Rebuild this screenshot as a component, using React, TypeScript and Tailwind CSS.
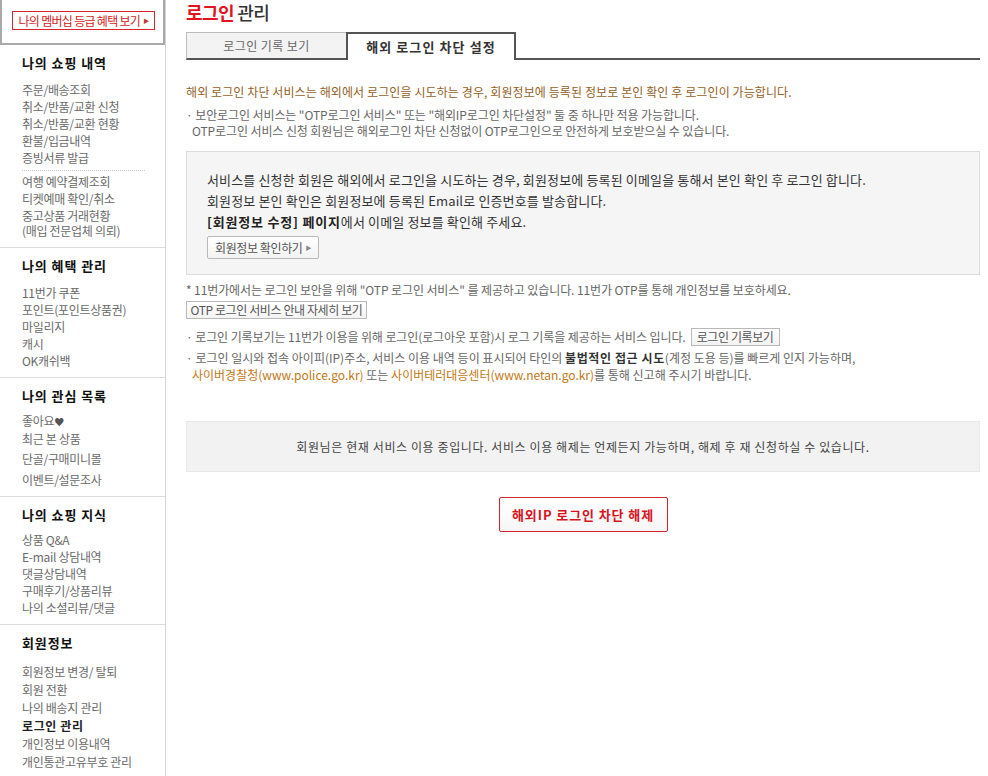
import React from "react";

type MenuItem = { label: React.ReactNode; className?: string };
type MenuSection = {
  title: string;
  items: MenuItem[];
  listClass?: string;
  dividerAfter?: number;
};

const sections: MenuSection[] = [
  {
    title: "나의 쇼핑 내역",
    dividerAfter: 4,
    items: [
      { label: "주문/배송조회" },
      { label: "취소/반품/교환 신청" },
      { label: "취소/반품/교환 현황" },
      { label: "환불/입금내역" },
      { label: "증빙서류 발급" },
      { label: "여행 예약결제조회" },
      { label: "티켓예매 확인/취소" },
      {
        label: (
          <>
            중고상품 거래현황
            <br />
            (매입 전문업체 의뢰)
          </>
        ),
        className: "leading-[15px] -mt-[1px]",
      },
    ],
  },
  {
    title: "나의 혜택 관리",
    items: [
      { label: "11번가 쿠폰" },
      { label: "포인트(포인트상품권)" },
      { label: "마일리지" },
      { label: "캐시" },
      { label: "OK캐쉬백" },
    ],
  },
  {
    title: "나의 관심 목록",
    listClass: "mt-[10px] gap-[3px]",
    items: [
      {
        label: (
          <>
            좋아요<span className="text-[#555] text-[10px] leading-[10px]">♥</span>
          </>
        ),
      },
      { label: "최근 본 상품", className: "mt-[1px]" },
      { label: "단골/구매미니몰", className: "mt-[3px]" },
      { label: "이벤트/설문조사", className: "mt-[4px]" },
    ],
  },
  {
    title: "나의 쇼핑 지식",
    listClass: "mt-[10px] gap-[3px]",
    items: [
      { label: "상품 Q&A" },
      { label: "E-mail 상담내역" },
      { label: "댓글상담내역" },
      { label: "구매후기/상품리뷰" },
      { label: "나의 소셜리뷰/댓글" },
    ],
  },
  {
    title: "회원정보",
    listClass: "mt-[14px] gap-[4px]",
    items: [
      { label: "회원정보 변경/ 탈퇴" },
      { label: "회원 전환" },
      { label: "나의 배송지 관리" },
      { label: "로그인 관리", className: "font-bold text-[#222] tracking-[0.6px]" },
      { label: "개인정보 이용내역" },
      { label: "개인통관고유부호 관리" },
    ],
  },
];

const Sidebar: React.FC = () => {
  return (
    <aside className="w-[166px] shrink-0 border-r border-[#d3d3d3] min-h-[776px]">
      {/* membership box */}
      <div className="h-[45px] border-l-2 border-r-2 border-b-2 border-[#a9a9a9] pt-[11px] pl-[10px]">
        <button className="h-[19px] w-[143px] border border-[#d6262c] bg-white text-[12px] leading-[17px] tracking-[-0.7px] text-[#d41a21] flex items-center justify-center gap-[3px] whitespace-nowrap">
          나의 멤버십 등급 혜택 보기
          <span className="text-[6px] text-[#c33]">▶</span>
        </button>
      </div>

      {sections.map((s) => (
        <div
          key={s.title}
          className="border-b border-[#dddddd] pt-[10px] pb-[9px] pl-[22px]"
        >
          <h4 className="text-[13px] leading-[16px] font-bold text-[#111] tracking-[0.9px]">
            {s.title}
          </h4>
          <ul
            className={
              "flex flex-col text-[12px] leading-[14px] text-[#6a6a6a] tracking-[-0.3px] " +
              (s.listClass ?? "mt-[12px] gap-[3px]")
            }
          >
            {s.items.map((it, i) => (
              <React.Fragment key={i}>
                <li className={"whitespace-nowrap " + (it.className ?? "")}>
                  {it.label}
                </li>
                {s.dividerAfter === i && (
                  <li className="mt-[2px] mb-[1px] mr-[20px] border-t border-dotted border-[#c8c8c8]" />
                )}
              </React.Fragment>
            ))}
          </ul>
        </div>
      ))}
    </aside>
  );
};

const SmallButton: React.FC<{ children: React.ReactNode; className?: string }> = ({
  children,
  className,
}) => (
  <button
    className={
      "border border-[#b9b9b9] bg-gradient-to-b from-white to-[#f3f3f3] text-[#555] text-[12px] tracking-[-0.4px] px-[7px] flex items-center gap-[3px] whitespace-nowrap " +
      (className ?? "")
    }
  >
    {children}
  </button>
);

const App: React.FC = () => {
  return (
    <div className="flex bg-white font-['Noto_Sans_CJK_KR',sans-serif] text-[#666]">
      <Sidebar />

      {/* MAIN */}
      <main className="ml-[20px] w-[794px]">
        <h2 className="text-[18px] leading-[24px] tracking-[-0.6px]">
          <span className="font-bold text-[#e0141e]">로그인</span>{" "}
          <span className="font-medium text-[#333]">관리</span>
        </h2>

        {/* tabs */}
        <div className="mt-[8px] flex h-[28px]">
          <div className="w-[160px] bg-[#f3f3f3] border-t border-l border-[#bdbdbd] border-b-2 border-b-[#555] flex items-center justify-center text-[12px] tracking-[0.4px] text-[#666]">
            로그인 기록 보기
          </div>
          <div className="w-[170px] bg-white border-2 border-b-0 border-[#555] flex items-center justify-center text-[13px] font-bold tracking-[1.1px] text-[#333]">
            해외 로그인 차단 설정
          </div>
          <div className="flex-1 border-b-2 border-[#555]" />
        </div>

        <p className="mt-[24px] text-[12px] leading-[16px] tracking-[0.1px] text-[#94611f]">
          해외 로그인 차단 서비스는 해외에서 로그인을 시도하는 경우, 회원정보에 등록된 정보로 본인 확인 후 로그인이 가능합니다.
        </p>

        <div className="mt-[7px] text-[12px] leading-[16px] tracking-[-0.1px] text-[#666]">
          <p>· 보안로그인 서비스는 "OTP로그인 서비스" 또는 "해외IP로그인 차단설정" 둘 중 하나만 적용 가능합니다.</p>
          <p className="pl-[6px]">
            OTP로그인 서비스 신청 회원님은 해외로그인 차단 신청없이 OTP로그인으로 안전하게 보호받으실 수 있습니다.
          </p>
        </div>

        {/* info box */}
        <div className="mt-[12px] border border-[#dcdcdc] bg-[#f5f5f5] pt-[17px] pb-[15px] pl-[20px] text-[13px] leading-[21px] tracking-[0.15px] text-[#333]">
          <p>서비스를 신청한 회원은 해외에서 로그인을 시도하는 경우, 회원정보에 등록된 이메일을 통해서 본인 확인 후 로그인 합니다.</p>
          <p>회원정보 본인 확인은 회원정보에 등록된 Email로 인증번호를 발송합니다.</p>
          <p>
            <b className="text-[#222] tracking-[0.8px]">[회원정보 수정] 페이지</b>에서 이메일 정보를 확인해 주세요.
          </p>
          <SmallButton className="mt-[4px] h-[23px] rounded-[2px]">
            회원정보 확인하기
            <span className="text-[6px] text-[#888]">▶</span>
          </SmallButton>
        </div>

        <p className="mt-[7px] text-[12px] leading-[16px] tracking-[-0.1px] text-[#666]">
          * 11번가에서는 로그인 보안을 위해 "OTP 로그인 서비스" 를 제공하고 있습니다. 11번가 OTP를 통해 개인정보를 보호하세요.
        </p>
        <SmallButton className="mt-[3px] h-[18px] w-[181px] justify-center">
          OTP 로그인 서비스 안내 자세히 보기
        </SmallButton>

        <div className="mt-[9px] flex items-center h-[18px] text-[12px] tracking-[-0.1px] text-[#666] whitespace-nowrap">
          <span>· 로그인 기록보기는 11번가 이용을 위해 로그인(로그아웃 포함)시 로그 기록을 제공하는 서비스 입니다.</span>
          <SmallButton className="ml-[5px] h-[18px] w-[89px] justify-center">
            로그인 기록보기
          </SmallButton>
        </div>

        <div className="mt-[3px] text-[12px] leading-[17px] tracking-[0px] text-[#666]">
          <p>
            · 로그인 일시와 접속 아이피(IP)주소, 서비스 이용 내역 등이 표시되어 타인의{" "}
            <b className="text-[#333] tracking-[0.6px]">불법적인 접근 시도</b>(계정 도용 등)를 빠르게 인지 가능하며,
          </p>
          <p className="pl-[6px]">
            <span className="text-[#c27816]">사이버경찰청(www.police.go.kr)</span> 또는{" "}
            <span className="text-[#c27816]">사이버테러대응센터(www.netan.go.kr)</span>를 통해 신고해 주시기 바랍니다.
          </p>
        </div>

        {/* status box */}
        <div className="mt-[38px] h-[51px] border border-[#e8e8e8] bg-[#f2f2f2] flex items-center justify-center text-[12px] tracking-[0.6px] text-[#444]">
          회원님은 현재 서비스 이용 중입니다. 서비스 이용 해제는 언제든지 가능하며, 해제 후 재 신청하실 수 있습니다.
        </div>

        <div className="mt-[25px] flex justify-center">
          <button className="h-[35px] w-[169px] border border-[#d7242b] rounded-[2px] bg-gradient-to-b from-white to-[#f6f6f6] text-[13px] font-bold tracking-[0.9px] text-[#d8141c]">
            해외IP 로그인 차단 해제
          </button>
        </div>
      </main>
    </div>
  );
};

export default App;
